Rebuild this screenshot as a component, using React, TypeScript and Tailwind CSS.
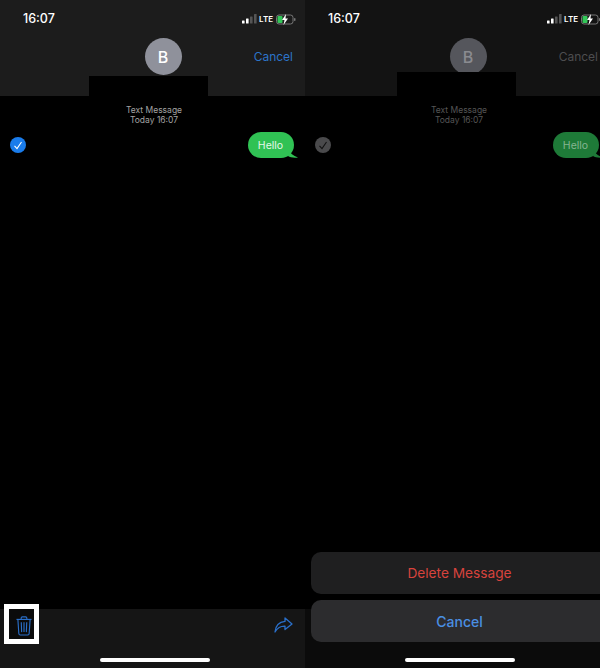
const font = { fontFamily: 'Inter, "Liberation Sans", sans-serif' };

function StatusIcons() {
  return (
    <div className="flex items-center gap-[2px]">
      <svg width="15" height="10" viewBox="0 0 15 10">
        <rect x="0" y="6.5" width="2.6" height="3" rx="0.5" fill="#fff" />
        <rect x="4" y="4.5" width="2.6" height="5" rx="0.5" fill="#fff" />
        <rect x="8" y="2.5" width="2.6" height="7" rx="0.5" fill="#555" />
        <rect x="12" y="0" width="2.6" height="9.5" rx="0.5" fill="#555" />
      </svg>
      <span className="text-[8px] leading-none font-semibold text-white">LTE</span>
      <svg width="20" height="11" viewBox="0 0 20 11" className="ml-[1px] shrink-0">
        <rect x="0.5" y="1" width="16.5" height="9" rx="2.5" fill="none" stroke="#777" />
        <rect x="1.5" y="2" width="5" height="7" rx="1" fill="#34c759" />
        <rect x="18" y="4" width="1.5" height="3" rx="0.7" fill="#777" />
        <path d="M10 0 L6 6 L8.5 6 L7.5 11 L12 4.5 L9.5 4.5 Z" fill="#fff" />
      </svg>
    </div>
  );
}

function TrashIcon() {
  return (
    <svg width="16" height="20" viewBox="0 0 17 21" fill="none" stroke="#2a6fc9" strokeWidth="1.2">
      <path d="M0.5 3.5 H16.5" />
      <path d="M5.5 3.5 V2 Q5.5 0.8 6.8 0.8 H10.2 Q11.5 0.8 11.5 2 V3.5" />
      <path d="M2 3.5 L3 18.5 Q3.1 20 4.6 20 H12.4 Q13.9 20 14 18.5 L15 3.5" />
      <path d="M5.6 6.5 L6 17 M8.5 6.5 V17 M11.4 6.5 L11 17" />
    </svg>
  );
}

function ShareIcon() {
  return (
    <svg width="19" height="16" viewBox="0 0 19 16" fill="none" stroke="#2a6fc9" strokeWidth="1.3" strokeLinejoin="round">
      <path d="M11 1 L18 7 L11 12.5 V9.2 C6.5 9 3.5 10.8 1 15 C1.5 9 5 5 11 4.4 Z" />
    </svg>
  );
}

function Screen({ dim }: { dim: boolean }) {
  return (
    <div className="relative flex h-[668px] w-[305px] shrink-0 flex-col bg-black">
      {/* Header */}
      <div className={dim ? 'h-[96px] shrink-0 bg-[#131313]' : 'h-[96px] shrink-0 bg-[#1c1c1c]'}>
        <div className="flex h-[38px] items-center justify-between pl-[23px] pr-[9px]">
          <span className="text-[12.5px] font-medium text-white">16:07</span>
          <StatusIcons />
        </div>
        <div className="relative flex justify-center pl-[21px]">
          <div className={dim ? 'flex h-[37px] w-[37px] items-center justify-center rounded-full bg-[#55565c] text-[16px] font-medium text-[#8a8b90]' : 'flex h-[37px] w-[37px] items-center justify-center rounded-full bg-[#8f919b] text-[16px] font-medium text-white'}>
            B
          </div>
          <span className={dim ? 'absolute right-[12px] top-[10px] text-[12px] text-[#4d4d4f]' : 'absolute right-[12px] top-[10px] text-[12px] text-[#2c74c8]'}>
            Cancel
          </span>
        </div>
      </div>

      {/* Message */}
      <div className="flex-1">
        <div className={dim ? 'pt-[9px] pl-[3px] text-center text-[8.5px] leading-[10px] text-[#555]' : 'pt-[9px] pl-[3px] text-center text-[8.5px] leading-[10px] text-[#a3a3a3]'}>
          <p>Text Message</p>
          <p>Today 16:07</p>
        </div>
        <div className="mt-[7px] flex items-center justify-between pl-[10px] pr-[11px]">
          <div className={dim ? 'flex h-[16px] w-[16px] items-center justify-center rounded-full bg-[#4a4a4c]' : 'flex h-[16px] w-[16px] items-center justify-center rounded-full bg-[#1a7ceb]'}>
            <svg width="10" height="9" viewBox="0 0 10 9" fill="none" stroke={dim ? '#111' : '#fff'} strokeWidth="1.1">
              <path d="M1.5 4.8 L4 7.5 L8.5 1" />
            </svg>
          </div>
          <div className="relative">
            <div className={dim ? 'flex h-[26px] w-[46px] items-center justify-center rounded-[13px] bg-[#1e7a38] pt-[1px] pr-[1px] text-[10.5px] text-[#86b592]' : 'flex h-[26px] w-[46px] items-center justify-center rounded-[13px] bg-[#30c254] pt-[1px] pr-[1px] text-[10.5px] text-[#e6f7ea]'}>
              Hello
            </div>
            <svg width="10" height="8" viewBox="0 0 10 8" className="absolute -right-[4px] bottom-0">
              <path d="M1 0 C2 3 5 6 10 7.5 C6 8 2 7.5 0 6 Z" fill={dim ? '#1e7a38' : '#30c254'} />
            </svg>
          </div>
        </div>
      </div>

      {/* Bottom bar */}
      <div className={dim ? 'flex h-[59px] shrink-0 flex-col bg-[#0b0b0b]' : 'flex h-[59px] shrink-0 flex-col bg-[#151515]'}>
        <div className="flex flex-1 items-start justify-end pt-[8px] pr-[12px]">
          {dim ? <span /> : <ShareIcon />}
        </div>
        <div className="mb-[6px] ml-[100px] h-[4px] w-[110px] rounded-full bg-white" />
      </div>

      {/* Highlight around the trash icon */}
      {!dim && (
        <div className="absolute left-[4px] top-[604px] h-[40px] w-[35px] border-[5px] border-white">
          <div className="flex h-full w-full items-center justify-center bg-[#0b0b0b] pt-[3px] pl-[5px]">
            <TrashIcon />
          </div>
        </div>
      )}

      {/* Action sheet */}
      {dim && (
        <div className="absolute bottom-[26px] left-[6px] flex w-[299px] flex-col gap-[6px]">
          <button className="h-[42px] rounded-[10px] bg-[#1f1f20] pr-[2px] text-[13.7px] text-[#d7433d]">Delete Message</button>
          <button className="h-[42px] rounded-[10px] bg-[#2c2c2e] pr-[2px] text-[14px] font-medium text-[#4a8fe3]">Cancel</button>
        </div>
      )}

      {/* Covered part of the header */}
      <div className={dim ? 'absolute left-[92px] top-[72px] h-[24px] w-[119px] bg-black' : 'absolute left-[89px] top-[76px] h-[20px] w-[119px] bg-black'} />
    </div>
  );
}

export default function App() {
  return (
    <div className="flex h-[668px] w-[600px] overflow-hidden bg-black" style={font}>
      <Screen dim={false} />
      <div className="w-[295px] shrink-0 overflow-hidden">
        <Screen dim={true} />
      </div>
    </div>
  );
}
